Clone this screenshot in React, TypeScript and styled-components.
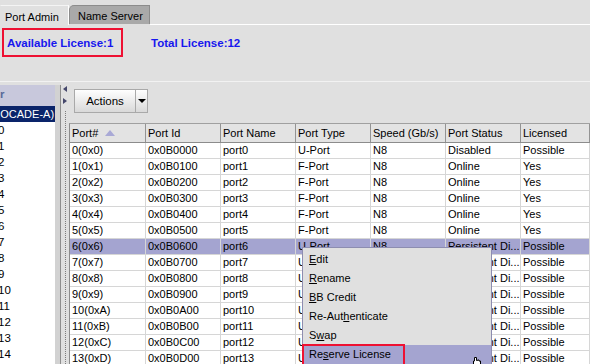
import styled, { createGlobalStyle } from "styled-components"

const GlobalStyle = createGlobalStyle`
  html, body {
    margin: 0;
    padding: 0;
    width: 590px;
    height: 364px;
    overflow: hidden;
    background: #e0e0e0;
  }
  body {
    font-family: "Liberation Sans", Arial, sans-serif;
    font-size: 11px;
    color: #000;
  }
`

const Page = styled.div`
  position: relative;
  width: 590px;
  height: 364px;
  overflow: hidden;
  display: flex;
  flex-direction: column;
`

const TabStrip = styled.div`
  display: flex;
  align-items: flex-end;
  height: 25px;
  flex-shrink: 0;
`

type TabProps = { $active?: boolean }
const Tab = styled.div<TabProps>`
  box-sizing: border-box;
  display: flex;
  align-items: center;
  height: ${p => (p.$active ? "20px" : "19px")};
  width: ${p => (p.$active ? "69px" : "81px")};
  padding-left: ${p => (p.$active ? "4px" : "8px")};
  padding-top: 2px;
  background: ${p => (p.$active ? "#e0e0e0" : "#a9a9a9")};
  border-top: 1px solid ${p => (p.$active ? "#f4f4f4" : "#8c8c8c")};
  border-left: 1px solid ${p => (p.$active ? "#e0e0e0" : "#8c8c8c")};
  border-right: 1px solid ${p => (p.$active ? "#ffffff" : "#8c8c8c")};
  border-top-left-radius: ${p => (p.$active ? "0" : "5px")};
  margin-bottom: ${p => (p.$active ? "0" : "1px")};
  color: #000;
`

const TabFill = styled.div`
  flex: 1;
  height: 1px;
  background: #ffffff;
`

const LicenseBar = styled.div`
  display: flex;
  align-items: center;
  padding: 3px 0 0 2px;
  height: 29px;
  gap: 28px;
  flex-shrink: 0;
`

type LicenseProps = { $boxed?: boolean }
const LicenseLabel = styled.div<LicenseProps>`
  box-sizing: border-box;
  display: flex;
  align-items: center;
  height: 29px;
  width: ${p => (p.$boxed ? "121px" : "auto")};
  padding-left: ${p => (p.$boxed ? "3px" : "0")};
  border: ${p => (p.$boxed ? "2px solid #ee1133" : "none")};
  color: #1717ee;
  font-weight: bold;
  font-size: 11.5px;
`

const Separator = styled.div`
  margin-top: 24px;
  height: 1px;
  background: #f2f2f2;
  flex-shrink: 0;
`

const Workspace = styled.div`
  display: flex;
  flex: 1;
  min-height: 0;
`

const TreePanel = styled.div`
  margin-top: 3px;
  width: 55px;
  background: #ffffff;
  overflow: hidden;
  flex-shrink: 0;
  font-size: 11.5px;
`

const TreeHeader = styled.div`
  height: 21px;
  background: #c8c8dc;
  color: #5a6a9a;
  font-weight: bold;
  line-height: 19px;
`

type TreeRowProps = { $selected?: boolean }
const TreeRow = styled.div<TreeRowProps>`
  height: 16px;
  line-height: 16px;
  white-space: nowrap;
  font-size: ${p => (p.$selected ? "11px" : "11.5px")};
  background: ${p => (p.$selected ? "#0a246a" : "transparent")};
  color: ${p => (p.$selected ? "#ffffff" : "#000")};
  > span {
    margin-left: ${p => (p.$selected ? "-15px" : "-2px")};
  }
`

const Sash = styled.div`
  margin-top: 3px;
  width: 5px;
  background: #d2d2d2;
  border-right: 1px solid #8e8e8e;
  flex-shrink: 0;
`

const Splitter = styled.div`
  width: 8px;
  display: flex;
  flex-direction: column;
  flex-shrink: 0;
  padding-top: 4px;
`

type ArrowProps = { $dir: "left" | "right" }
const SplitArrow = styled.div<ArrowProps>`
  width: 0;
  height: 0;
  margin-left: 2px;
  margin-bottom: 6px;
  border-top: 3px solid transparent;
  border-bottom: 3px solid transparent;
  ${p =>
    p.$dir === "left"
      ? "border-right: 4px solid #45476b;"
      : "border-left: 4px solid #45476b;"}
`

const DottedLine = styled.div`
  flex: 1;
  margin-left: 4px;
  margin-top: 1px;
  border-left: 1px dotted #7c7c7c;
`

const Main = styled.div`
  flex: 1;
  display: flex;
  flex-direction: column;
  padding-top: 7px;
  min-width: 0;
`

const ActionsGroup = styled.div`
  display: flex;
  margin-left: 5px;
  height: 24px;
  flex-shrink: 0;
`

const ActionsButton = styled.div`
  box-sizing: border-box;
  width: 62px;
  display: flex;
  align-items: center;
  justify-content: center;
  font-size: 11.5px;
  background: linear-gradient(#fefefe, #d9d9d9);
  border: 1px solid #a9a9a9;
`

const DropButton = styled.div`
  box-sizing: border-box;
  width: 12px;
  display: flex;
  align-items: center;
  justify-content: center;
  background: linear-gradient(#fefefe, #d9d9d9);
  border: 1px solid #a9a9a9;
  border-left: none;
  &::after {
    content: "";
    border-left: 4px solid transparent;
    border-right: 4px solid transparent;
    border-top: 4px solid #000;
  }
`

const Table = styled.div`
  margin-top: 10px;
  flex-shrink: 0;
  border-left: 1px solid #8c8c8c;
  border-top: 1px solid #a0a0a0;
  background: #ffffff;
`

const Cols = "76px 75px 75px 75px 75px 75px 1fr"

const HeaderRow = styled.div`
  display: grid;
  grid-template-columns: ${Cols};
  height: 18px;
  background: #e3e3e3;
  border-bottom: 1px solid #8c8c8c;
`

const HeaderCell = styled.div`
  display: flex;
  align-items: center;
  gap: 7px;
  padding-left: 2px;
  border-right: 1px solid #939393;
  white-space: nowrap;
  overflow: hidden;
`

type RowProps = { $selected?: boolean }
const Row = styled.div<RowProps>`
  display: grid;
  grid-template-columns: ${Cols};
  height: 16px;
  box-sizing: border-box;
  border-bottom: 1px solid #d6d6d6;
  background: ${p => (p.$selected ? "#a4a4d0" : "#ffffff")};
`

const Cell = styled.div`
  padding-left: 2px;
  line-height: 15px;
  border-right: 1px solid #d6d6d6;
  white-space: nowrap;
  overflow: hidden;
`

const Menu = styled.div`
  position: absolute;
  left: 302px;
  top: 247px;
  width: 190px;
  box-sizing: border-box;
  padding-top: 2px;
  background: #e0e0e0;
  border: 1px solid #8d8db0;
`

type MenuItemProps = { $hover?: boolean }
const MenuItem = styled.div<MenuItemProps>`
  position: relative;
  height: 19px;
  line-height: 19px;
  padding-left: 6px;
  background: ${p => (p.$hover ? "#a4a4d0" : "transparent")};
  u {
    text-decoration: underline;
  }
`

const Highlight = styled.div`
  position: absolute;
  left: -1px;
  top: -1px;
  width: 103px;
  height: 22px;
  box-sizing: border-box;
  border: 2px solid #ee1133;
`

const Cursor = styled.svg`
  position: absolute;
  left: 472px;
  top: 357px;
`

type Port = {
  n: number
  type: string
  status: string
  lic: string
}

const ports: Port[] = Array.from({ length: 14 }, (_, n) => {
  if (n === 0) return { n, type: "U-Port", status: "Disabled", lic: "Possible" }
  if (n <= 5) return { n, type: "F-Port", status: "Online", lic: "Yes" }
  return { n, type: "U-Port", status: "Persistent Di...", lic: "Possible" }
})

const hex = (n: number) => n.toString(16).toUpperCase()
const portId = (n: number) => "0x0B" + hex(n).padStart(2, "0") + "00"

export default function App() {
  return (
    <Page>
      <GlobalStyle />
      <TabStrip>
        <Tab $active>Port Admin</Tab>
        <Tab>Name Server</Tab>
        <TabFill />
      </TabStrip>
      <LicenseBar>
        <LicenseLabel $boxed>Available License:1</LicenseLabel>
        <LicenseLabel>Total License:12</LicenseLabel>
      </LicenseBar>
      <Separator />
      <Workspace>
        <TreePanel>
          <TreeHeader>r</TreeHeader>
          <TreeRow $selected>
            <span>BROCADE-A)</span>
          </TreeRow>
          {Array.from({ length: 15 }, (_, i) => (
            <TreeRow key={i}>
              <span>{i}</span>
            </TreeRow>
          ))}
        </TreePanel>
        <Sash />
        <Splitter>
          <SplitArrow $dir="left" />
          <SplitArrow $dir="right" />
          <DottedLine />
        </Splitter>
        <Main>
          <ActionsGroup>
            <ActionsButton>Actions</ActionsButton>
            <DropButton />
          </ActionsGroup>
          <Table>
            <HeaderRow>
              <HeaderCell>
                Port#
                <svg width="10" height="6" viewBox="0 0 10 6">
                  <path d="M5 0 L10 6 L0 6 Z" fill="#a9a9d6" />
                </svg>
              </HeaderCell>
              <HeaderCell>Port Id</HeaderCell>
              <HeaderCell>Port Name</HeaderCell>
              <HeaderCell>Port Type</HeaderCell>
              <HeaderCell>Speed (Gb/s)</HeaderCell>
              <HeaderCell>Port Status</HeaderCell>
              <HeaderCell>Licensed</HeaderCell>
            </HeaderRow>
            {ports.map(p => (
              <Row key={p.n} $selected={p.n === 6}>
                <Cell>{`${p.n}(0x${hex(p.n)})`}</Cell>
                <Cell>{portId(p.n)}</Cell>
                <Cell>{`port${p.n}`}</Cell>
                <Cell>{p.type}</Cell>
                <Cell>N8</Cell>
                <Cell>{p.status}</Cell>
                <Cell>{p.lic}</Cell>
              </Row>
            ))}
          </Table>
        </Main>
      </Workspace>

      <Menu>
        <MenuItem>
          <u>E</u>dit
        </MenuItem>
        <MenuItem>
          <u>R</u>ename
        </MenuItem>
        <MenuItem>
          <u>B</u>B Credit
        </MenuItem>
        <MenuItem>
          Re-Aut<u>h</u>enticate
        </MenuItem>
        <MenuItem>
          S<u>w</u>ap
        </MenuItem>
        <MenuItem $hover>
          Re<u>s</u>erve License
          <Highlight />
        </MenuItem>
      </Menu>
      <Cursor width="10" height="8" viewBox="0 0 10 8">
        <path d="M2.5 0.5 h2 v3 h1 v-0.5 h1.5 v1 h1.5 v4 H1.5 V4 h1 z" fill="#fff" stroke="#000" strokeWidth="1" />
      </Cursor>
    </Page>
  )
}
